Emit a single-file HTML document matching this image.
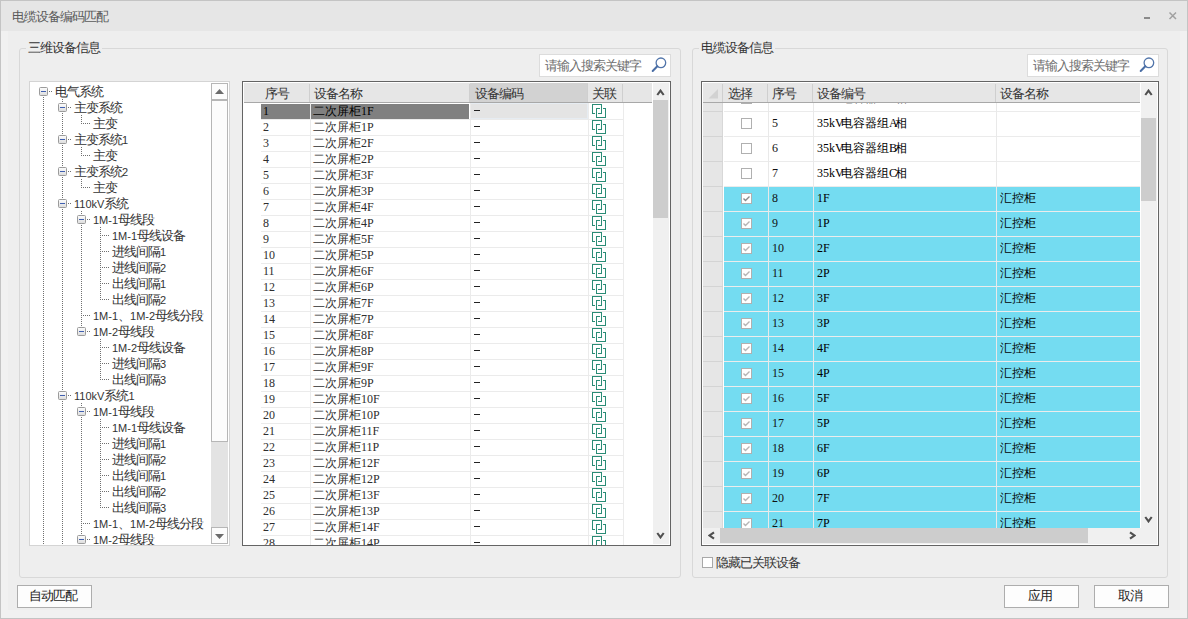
<!DOCTYPE html><html><head><meta charset="utf-8"><style>
*{margin:0;padding:0;box-sizing:border-box}
html,body{width:1188px;height:619px;overflow:hidden;background:#eeeeee;font-family:"Liberation Sans", sans-serif;font-size:12px;color:#111}
.abs{position:absolute}
.t{position:absolute;white-space:nowrap;line-height:16px;font-size:13px;letter-spacing:-1px}
.m{font-family:"Liberation Serif",serif;font-size:12px;letter-spacing:0}
.n{font-family:"Liberation Sans", sans-serif;font-size:11px;letter-spacing:0}
.s{font-size:12px;letter-spacing:0}
</style></head><body>
<div class="abs" style="left:0;top:0;width:1188px;height:619px;border:1px solid #c4c4c4;background:#f1f1f1"></div>
<div class="abs" style="left:1px;top:1px;width:1186px;height:30px;background:#e6e6e6"></div>
<div class="t" style="left:12px;top:9px;color:#5a5a5a">电缆设备编码匹配</div>
<div class="abs" style="left:1144px;top:17px;width:6px;height:2px;background:#8a8a8a"></div>
<svg class="abs" style="left:1168px;top:11px" width="10" height="10"><path d="M1.5 1.5L8 8M8 1.5L1.5 8" stroke="#a0a0a0" stroke-width="1.5"/></svg>
<div class="abs" style="left:8px;top:31px;width:1172px;height:579px;background:#eeeeee"></div>
<div class="abs" style="left:19px;top:48px;width:662px;height:530px;border:1px solid #d8d8d8;border-radius:3px"></div>
<div class="abs" style="left:26px;top:42px;width:76px;height:12px;background:#eeeeee"></div>
<div class="t" style="left:28px;top:40px;color:#333">三维设备信息</div>
<div class="abs" style="left:692px;top:48px;width:476px;height:530px;border:1px solid #d8d8d8;border-radius:3px"></div>
<div class="abs" style="left:699px;top:42px;width:76px;height:12px;background:#eeeeee"></div>
<div class="t" style="left:701px;top:40px;color:#333">电缆设备信息</div>
<div class="abs" style="left:539px;top:54px;width:132px;height:23px;border:1px solid #dcdcdc;background:#fff"></div>
<div class="t" style="left:545px;top:58px;color:#6d6d6d">请输入搜索关键字</div>
<svg class="abs" style="left:650px;top:56px" width="18" height="18"><circle cx="10.9" cy="6.8" r="4.8" fill="none" stroke="#5275aa" stroke-width="1.3"/><path d="M7.3 10.3L2.7 15" stroke="#4a6ea5" stroke-width="2" stroke-linecap="round"/></svg>
<div class="abs" style="left:1027px;top:54px;width:132px;height:23px;border:1px solid #dcdcdc;background:#fff"></div>
<div class="t" style="left:1033px;top:58px;color:#6d6d6d">请输入搜索关键字</div>
<svg class="abs" style="left:1138px;top:56px" width="18" height="18"><circle cx="10.9" cy="6.8" r="4.8" fill="none" stroke="#5275aa" stroke-width="1.3"/><path d="M7.3 10.3L2.7 15" stroke="#4a6ea5" stroke-width="2" stroke-linecap="round"/></svg>
<div class="abs" style="left:29px;top:81px;width:201px;height:465px;border:1px solid #d4d4d4;background:#fff;overflow:hidden">
<svg class="abs" style="left:0;top:0" width="201" height="465"><g fill="#707070"><rect x="32" y="17" width="1" height="1"/><rect x="32" y="19" width="1" height="1"/><rect x="51" y="33" width="1" height="1"/><rect x="51" y="35" width="1" height="1"/><rect x="51" y="37" width="1" height="1"/><rect x="51" y="39" width="1" height="1"/><rect x="51" y="41" width="1" height="1"/><rect x="32" y="31" width="1" height="1"/><rect x="32" y="33" width="1" height="1"/><rect x="32" y="35" width="1" height="1"/><rect x="32" y="37" width="1" height="1"/><rect x="32" y="39" width="1" height="1"/><rect x="32" y="41" width="1" height="1"/><rect x="32" y="43" width="1" height="1"/><rect x="32" y="45" width="1" height="1"/><rect x="32" y="47" width="1" height="1"/><rect x="32" y="49" width="1" height="1"/><rect x="32" y="51" width="1" height="1"/><rect x="51" y="65" width="1" height="1"/><rect x="51" y="67" width="1" height="1"/><rect x="51" y="69" width="1" height="1"/><rect x="51" y="71" width="1" height="1"/><rect x="51" y="73" width="1" height="1"/><rect x="32" y="63" width="1" height="1"/><rect x="32" y="65" width="1" height="1"/><rect x="32" y="67" width="1" height="1"/><rect x="32" y="69" width="1" height="1"/><rect x="32" y="71" width="1" height="1"/><rect x="32" y="73" width="1" height="1"/><rect x="32" y="75" width="1" height="1"/><rect x="32" y="77" width="1" height="1"/><rect x="32" y="79" width="1" height="1"/><rect x="32" y="81" width="1" height="1"/><rect x="32" y="83" width="1" height="1"/><rect x="51" y="97" width="1" height="1"/><rect x="51" y="99" width="1" height="1"/><rect x="51" y="101" width="1" height="1"/><rect x="51" y="103" width="1" height="1"/><rect x="51" y="105" width="1" height="1"/><rect x="32" y="95" width="1" height="1"/><rect x="32" y="97" width="1" height="1"/><rect x="32" y="99" width="1" height="1"/><rect x="32" y="101" width="1" height="1"/><rect x="32" y="103" width="1" height="1"/><rect x="32" y="105" width="1" height="1"/><rect x="32" y="107" width="1" height="1"/><rect x="32" y="109" width="1" height="1"/><rect x="32" y="111" width="1" height="1"/><rect x="32" y="113" width="1" height="1"/><rect x="32" y="115" width="1" height="1"/><rect x="51" y="129" width="1" height="1"/><rect x="51" y="131" width="1" height="1"/><rect x="70" y="145" width="1" height="1"/><rect x="70" y="147" width="1" height="1"/><rect x="70" y="149" width="1" height="1"/><rect x="70" y="151" width="1" height="1"/><rect x="70" y="153" width="1" height="1"/><rect x="70" y="155" width="1" height="1"/><rect x="70" y="157" width="1" height="1"/><rect x="70" y="159" width="1" height="1"/><rect x="70" y="161" width="1" height="1"/><rect x="70" y="163" width="1" height="1"/><rect x="70" y="165" width="1" height="1"/><rect x="70" y="167" width="1" height="1"/><rect x="70" y="169" width="1" height="1"/><rect x="70" y="171" width="1" height="1"/><rect x="70" y="173" width="1" height="1"/><rect x="70" y="175" width="1" height="1"/><rect x="70" y="177" width="1" height="1"/><rect x="70" y="179" width="1" height="1"/><rect x="70" y="181" width="1" height="1"/><rect x="70" y="183" width="1" height="1"/><rect x="70" y="185" width="1" height="1"/><rect x="70" y="187" width="1" height="1"/><rect x="70" y="189" width="1" height="1"/><rect x="70" y="191" width="1" height="1"/><rect x="70" y="193" width="1" height="1"/><rect x="70" y="195" width="1" height="1"/><rect x="70" y="197" width="1" height="1"/><rect x="70" y="199" width="1" height="1"/><rect x="70" y="201" width="1" height="1"/><rect x="70" y="203" width="1" height="1"/><rect x="70" y="205" width="1" height="1"/><rect x="70" y="207" width="1" height="1"/><rect x="70" y="209" width="1" height="1"/><rect x="70" y="211" width="1" height="1"/><rect x="70" y="213" width="1" height="1"/><rect x="70" y="215" width="1" height="1"/><rect x="70" y="217" width="1" height="1"/><rect x="51" y="143" width="1" height="1"/><rect x="51" y="145" width="1" height="1"/><rect x="51" y="147" width="1" height="1"/><rect x="51" y="149" width="1" height="1"/><rect x="51" y="151" width="1" height="1"/><rect x="51" y="153" width="1" height="1"/><rect x="51" y="155" width="1" height="1"/><rect x="51" y="157" width="1" height="1"/><rect x="51" y="159" width="1" height="1"/><rect x="51" y="161" width="1" height="1"/><rect x="51" y="163" width="1" height="1"/><rect x="51" y="165" width="1" height="1"/><rect x="51" y="167" width="1" height="1"/><rect x="51" y="169" width="1" height="1"/><rect x="51" y="171" width="1" height="1"/><rect x="51" y="173" width="1" height="1"/><rect x="51" y="175" width="1" height="1"/><rect x="51" y="177" width="1" height="1"/><rect x="51" y="179" width="1" height="1"/><rect x="51" y="181" width="1" height="1"/><rect x="51" y="183" width="1" height="1"/><rect x="51" y="185" width="1" height="1"/><rect x="51" y="187" width="1" height="1"/><rect x="51" y="189" width="1" height="1"/><rect x="51" y="191" width="1" height="1"/><rect x="51" y="193" width="1" height="1"/><rect x="51" y="195" width="1" height="1"/><rect x="51" y="197" width="1" height="1"/><rect x="51" y="199" width="1" height="1"/><rect x="51" y="201" width="1" height="1"/><rect x="51" y="203" width="1" height="1"/><rect x="51" y="205" width="1" height="1"/><rect x="51" y="207" width="1" height="1"/><rect x="51" y="209" width="1" height="1"/><rect x="51" y="211" width="1" height="1"/><rect x="51" y="213" width="1" height="1"/><rect x="51" y="215" width="1" height="1"/><rect x="51" y="217" width="1" height="1"/><rect x="51" y="219" width="1" height="1"/><rect x="51" y="221" width="1" height="1"/><rect x="51" y="223" width="1" height="1"/><rect x="51" y="225" width="1" height="1"/><rect x="51" y="227" width="1" height="1"/><rect x="51" y="229" width="1" height="1"/><rect x="51" y="231" width="1" height="1"/><rect x="51" y="233" width="1" height="1"/><rect x="51" y="235" width="1" height="1"/><rect x="51" y="237" width="1" height="1"/><rect x="51" y="239" width="1" height="1"/><rect x="51" y="241" width="1" height="1"/><rect x="51" y="243" width="1" height="1"/><rect x="70" y="257" width="1" height="1"/><rect x="70" y="259" width="1" height="1"/><rect x="70" y="261" width="1" height="1"/><rect x="70" y="263" width="1" height="1"/><rect x="70" y="265" width="1" height="1"/><rect x="70" y="267" width="1" height="1"/><rect x="70" y="269" width="1" height="1"/><rect x="70" y="271" width="1" height="1"/><rect x="70" y="273" width="1" height="1"/><rect x="70" y="275" width="1" height="1"/><rect x="70" y="277" width="1" height="1"/><rect x="70" y="279" width="1" height="1"/><rect x="70" y="281" width="1" height="1"/><rect x="70" y="283" width="1" height="1"/><rect x="70" y="285" width="1" height="1"/><rect x="70" y="287" width="1" height="1"/><rect x="70" y="289" width="1" height="1"/><rect x="70" y="291" width="1" height="1"/><rect x="70" y="293" width="1" height="1"/><rect x="70" y="295" width="1" height="1"/><rect x="70" y="297" width="1" height="1"/><rect x="32" y="127" width="1" height="1"/><rect x="32" y="129" width="1" height="1"/><rect x="32" y="131" width="1" height="1"/><rect x="32" y="133" width="1" height="1"/><rect x="32" y="135" width="1" height="1"/><rect x="32" y="137" width="1" height="1"/><rect x="32" y="139" width="1" height="1"/><rect x="32" y="141" width="1" height="1"/><rect x="32" y="143" width="1" height="1"/><rect x="32" y="145" width="1" height="1"/><rect x="32" y="147" width="1" height="1"/><rect x="32" y="149" width="1" height="1"/><rect x="32" y="151" width="1" height="1"/><rect x="32" y="153" width="1" height="1"/><rect x="32" y="155" width="1" height="1"/><rect x="32" y="157" width="1" height="1"/><rect x="32" y="159" width="1" height="1"/><rect x="32" y="161" width="1" height="1"/><rect x="32" y="163" width="1" height="1"/><rect x="32" y="165" width="1" height="1"/><rect x="32" y="167" width="1" height="1"/><rect x="32" y="169" width="1" height="1"/><rect x="32" y="171" width="1" height="1"/><rect x="32" y="173" width="1" height="1"/><rect x="32" y="175" width="1" height="1"/><rect x="32" y="177" width="1" height="1"/><rect x="32" y="179" width="1" height="1"/><rect x="32" y="181" width="1" height="1"/><rect x="32" y="183" width="1" height="1"/><rect x="32" y="185" width="1" height="1"/><rect x="32" y="187" width="1" height="1"/><rect x="32" y="189" width="1" height="1"/><rect x="32" y="191" width="1" height="1"/><rect x="32" y="193" width="1" height="1"/><rect x="32" y="195" width="1" height="1"/><rect x="32" y="197" width="1" height="1"/><rect x="32" y="199" width="1" height="1"/><rect x="32" y="201" width="1" height="1"/><rect x="32" y="203" width="1" height="1"/><rect x="32" y="205" width="1" height="1"/><rect x="32" y="207" width="1" height="1"/><rect x="32" y="209" width="1" height="1"/><rect x="32" y="211" width="1" height="1"/><rect x="32" y="213" width="1" height="1"/><rect x="32" y="215" width="1" height="1"/><rect x="32" y="217" width="1" height="1"/><rect x="32" y="219" width="1" height="1"/><rect x="32" y="221" width="1" height="1"/><rect x="32" y="223" width="1" height="1"/><rect x="32" y="225" width="1" height="1"/><rect x="32" y="227" width="1" height="1"/><rect x="32" y="229" width="1" height="1"/><rect x="32" y="231" width="1" height="1"/><rect x="32" y="233" width="1" height="1"/><rect x="32" y="235" width="1" height="1"/><rect x="32" y="237" width="1" height="1"/><rect x="32" y="239" width="1" height="1"/><rect x="32" y="241" width="1" height="1"/><rect x="32" y="243" width="1" height="1"/><rect x="32" y="245" width="1" height="1"/><rect x="32" y="247" width="1" height="1"/><rect x="32" y="249" width="1" height="1"/><rect x="32" y="251" width="1" height="1"/><rect x="32" y="253" width="1" height="1"/><rect x="32" y="255" width="1" height="1"/><rect x="32" y="257" width="1" height="1"/><rect x="32" y="259" width="1" height="1"/><rect x="32" y="261" width="1" height="1"/><rect x="32" y="263" width="1" height="1"/><rect x="32" y="265" width="1" height="1"/><rect x="32" y="267" width="1" height="1"/><rect x="32" y="269" width="1" height="1"/><rect x="32" y="271" width="1" height="1"/><rect x="32" y="273" width="1" height="1"/><rect x="32" y="275" width="1" height="1"/><rect x="32" y="277" width="1" height="1"/><rect x="32" y="279" width="1" height="1"/><rect x="32" y="281" width="1" height="1"/><rect x="32" y="283" width="1" height="1"/><rect x="32" y="285" width="1" height="1"/><rect x="32" y="287" width="1" height="1"/><rect x="32" y="289" width="1" height="1"/><rect x="32" y="291" width="1" height="1"/><rect x="32" y="293" width="1" height="1"/><rect x="32" y="295" width="1" height="1"/><rect x="32" y="297" width="1" height="1"/><rect x="32" y="299" width="1" height="1"/><rect x="32" y="301" width="1" height="1"/><rect x="32" y="303" width="1" height="1"/><rect x="32" y="305" width="1" height="1"/><rect x="32" y="307" width="1" height="1"/><rect x="51" y="321" width="1" height="1"/><rect x="51" y="323" width="1" height="1"/><rect x="70" y="337" width="1" height="1"/><rect x="70" y="339" width="1" height="1"/><rect x="70" y="341" width="1" height="1"/><rect x="70" y="343" width="1" height="1"/><rect x="70" y="345" width="1" height="1"/><rect x="70" y="347" width="1" height="1"/><rect x="70" y="349" width="1" height="1"/><rect x="70" y="351" width="1" height="1"/><rect x="70" y="353" width="1" height="1"/><rect x="70" y="355" width="1" height="1"/><rect x="70" y="357" width="1" height="1"/><rect x="70" y="359" width="1" height="1"/><rect x="70" y="361" width="1" height="1"/><rect x="70" y="363" width="1" height="1"/><rect x="70" y="365" width="1" height="1"/><rect x="70" y="367" width="1" height="1"/><rect x="70" y="369" width="1" height="1"/><rect x="70" y="371" width="1" height="1"/><rect x="70" y="373" width="1" height="1"/><rect x="70" y="375" width="1" height="1"/><rect x="70" y="377" width="1" height="1"/><rect x="70" y="379" width="1" height="1"/><rect x="70" y="381" width="1" height="1"/><rect x="70" y="383" width="1" height="1"/><rect x="70" y="385" width="1" height="1"/><rect x="70" y="387" width="1" height="1"/><rect x="70" y="389" width="1" height="1"/><rect x="70" y="391" width="1" height="1"/><rect x="70" y="393" width="1" height="1"/><rect x="70" y="395" width="1" height="1"/><rect x="70" y="397" width="1" height="1"/><rect x="70" y="399" width="1" height="1"/><rect x="70" y="401" width="1" height="1"/><rect x="70" y="403" width="1" height="1"/><rect x="70" y="405" width="1" height="1"/><rect x="70" y="407" width="1" height="1"/><rect x="70" y="409" width="1" height="1"/><rect x="70" y="411" width="1" height="1"/><rect x="70" y="413" width="1" height="1"/><rect x="70" y="415" width="1" height="1"/><rect x="70" y="417" width="1" height="1"/><rect x="70" y="419" width="1" height="1"/><rect x="70" y="421" width="1" height="1"/><rect x="70" y="423" width="1" height="1"/><rect x="70" y="425" width="1" height="1"/><rect x="51" y="335" width="1" height="1"/><rect x="51" y="337" width="1" height="1"/><rect x="51" y="339" width="1" height="1"/><rect x="51" y="341" width="1" height="1"/><rect x="51" y="343" width="1" height="1"/><rect x="51" y="345" width="1" height="1"/><rect x="51" y="347" width="1" height="1"/><rect x="51" y="349" width="1" height="1"/><rect x="51" y="351" width="1" height="1"/><rect x="51" y="353" width="1" height="1"/><rect x="51" y="355" width="1" height="1"/><rect x="51" y="357" width="1" height="1"/><rect x="51" y="359" width="1" height="1"/><rect x="51" y="361" width="1" height="1"/><rect x="51" y="363" width="1" height="1"/><rect x="51" y="365" width="1" height="1"/><rect x="51" y="367" width="1" height="1"/><rect x="51" y="369" width="1" height="1"/><rect x="51" y="371" width="1" height="1"/><rect x="51" y="373" width="1" height="1"/><rect x="51" y="375" width="1" height="1"/><rect x="51" y="377" width="1" height="1"/><rect x="51" y="379" width="1" height="1"/><rect x="51" y="381" width="1" height="1"/><rect x="51" y="383" width="1" height="1"/><rect x="51" y="385" width="1" height="1"/><rect x="51" y="387" width="1" height="1"/><rect x="51" y="389" width="1" height="1"/><rect x="51" y="391" width="1" height="1"/><rect x="51" y="393" width="1" height="1"/><rect x="51" y="395" width="1" height="1"/><rect x="51" y="397" width="1" height="1"/><rect x="51" y="399" width="1" height="1"/><rect x="51" y="401" width="1" height="1"/><rect x="51" y="403" width="1" height="1"/><rect x="51" y="405" width="1" height="1"/><rect x="51" y="407" width="1" height="1"/><rect x="51" y="409" width="1" height="1"/><rect x="51" y="411" width="1" height="1"/><rect x="51" y="413" width="1" height="1"/><rect x="51" y="415" width="1" height="1"/><rect x="51" y="417" width="1" height="1"/><rect x="51" y="419" width="1" height="1"/><rect x="51" y="421" width="1" height="1"/><rect x="51" y="423" width="1" height="1"/><rect x="51" y="425" width="1" height="1"/><rect x="51" y="427" width="1" height="1"/><rect x="51" y="429" width="1" height="1"/><rect x="51" y="431" width="1" height="1"/><rect x="51" y="433" width="1" height="1"/><rect x="51" y="435" width="1" height="1"/><rect x="51" y="437" width="1" height="1"/><rect x="51" y="439" width="1" height="1"/><rect x="51" y="441" width="1" height="1"/><rect x="51" y="443" width="1" height="1"/><rect x="51" y="445" width="1" height="1"/><rect x="51" y="447" width="1" height="1"/><rect x="51" y="449" width="1" height="1"/><rect x="51" y="451" width="1" height="1"/><rect x="13" y="15" width="1" height="1"/><rect x="13" y="17" width="1" height="1"/><rect x="13" y="19" width="1" height="1"/><rect x="13" y="21" width="1" height="1"/><rect x="13" y="23" width="1" height="1"/><rect x="13" y="25" width="1" height="1"/><rect x="13" y="27" width="1" height="1"/><rect x="13" y="29" width="1" height="1"/><rect x="13" y="31" width="1" height="1"/><rect x="13" y="33" width="1" height="1"/><rect x="13" y="35" width="1" height="1"/><rect x="13" y="37" width="1" height="1"/><rect x="13" y="39" width="1" height="1"/><rect x="13" y="41" width="1" height="1"/><rect x="13" y="43" width="1" height="1"/><rect x="13" y="45" width="1" height="1"/><rect x="13" y="47" width="1" height="1"/><rect x="13" y="49" width="1" height="1"/><rect x="13" y="51" width="1" height="1"/><rect x="13" y="53" width="1" height="1"/><rect x="13" y="55" width="1" height="1"/><rect x="13" y="57" width="1" height="1"/><rect x="13" y="59" width="1" height="1"/><rect x="13" y="61" width="1" height="1"/><rect x="13" y="63" width="1" height="1"/><rect x="13" y="65" width="1" height="1"/><rect x="13" y="67" width="1" height="1"/><rect x="13" y="69" width="1" height="1"/><rect x="13" y="71" width="1" height="1"/><rect x="13" y="73" width="1" height="1"/><rect x="13" y="75" width="1" height="1"/><rect x="13" y="77" width="1" height="1"/><rect x="13" y="79" width="1" height="1"/><rect x="13" y="81" width="1" height="1"/><rect x="13" y="83" width="1" height="1"/><rect x="13" y="85" width="1" height="1"/><rect x="13" y="87" width="1" height="1"/><rect x="13" y="89" width="1" height="1"/><rect x="13" y="91" width="1" height="1"/><rect x="13" y="93" width="1" height="1"/><rect x="13" y="95" width="1" height="1"/><rect x="13" y="97" width="1" height="1"/><rect x="13" y="99" width="1" height="1"/><rect x="13" y="101" width="1" height="1"/><rect x="13" y="103" width="1" height="1"/><rect x="13" y="105" width="1" height="1"/><rect x="13" y="107" width="1" height="1"/><rect x="13" y="109" width="1" height="1"/><rect x="13" y="111" width="1" height="1"/><rect x="13" y="113" width="1" height="1"/><rect x="13" y="115" width="1" height="1"/><rect x="13" y="117" width="1" height="1"/><rect x="13" y="119" width="1" height="1"/><rect x="13" y="121" width="1" height="1"/><rect x="13" y="123" width="1" height="1"/><rect x="13" y="125" width="1" height="1"/><rect x="13" y="127" width="1" height="1"/><rect x="13" y="129" width="1" height="1"/><rect x="13" y="131" width="1" height="1"/><rect x="13" y="133" width="1" height="1"/><rect x="13" y="135" width="1" height="1"/><rect x="13" y="137" width="1" height="1"/><rect x="13" y="139" width="1" height="1"/><rect x="13" y="141" width="1" height="1"/><rect x="13" y="143" width="1" height="1"/><rect x="13" y="145" width="1" height="1"/><rect x="13" y="147" width="1" height="1"/><rect x="13" y="149" width="1" height="1"/><rect x="13" y="151" width="1" height="1"/><rect x="13" y="153" width="1" height="1"/><rect x="13" y="155" width="1" height="1"/><rect x="13" y="157" width="1" height="1"/><rect x="13" y="159" width="1" height="1"/><rect x="13" y="161" width="1" height="1"/><rect x="13" y="163" width="1" height="1"/><rect x="13" y="165" width="1" height="1"/><rect x="13" y="167" width="1" height="1"/><rect x="13" y="169" width="1" height="1"/><rect x="13" y="171" width="1" height="1"/><rect x="13" y="173" width="1" height="1"/><rect x="13" y="175" width="1" height="1"/><rect x="13" y="177" width="1" height="1"/><rect x="13" y="179" width="1" height="1"/><rect x="13" y="181" width="1" height="1"/><rect x="13" y="183" width="1" height="1"/><rect x="13" y="185" width="1" height="1"/><rect x="13" y="187" width="1" height="1"/><rect x="13" y="189" width="1" height="1"/><rect x="13" y="191" width="1" height="1"/><rect x="13" y="193" width="1" height="1"/><rect x="13" y="195" width="1" height="1"/><rect x="13" y="197" width="1" height="1"/><rect x="13" y="199" width="1" height="1"/><rect x="13" y="201" width="1" height="1"/><rect x="13" y="203" width="1" height="1"/><rect x="13" y="205" width="1" height="1"/><rect x="13" y="207" width="1" height="1"/><rect x="13" y="209" width="1" height="1"/><rect x="13" y="211" width="1" height="1"/><rect x="13" y="213" width="1" height="1"/><rect x="13" y="215" width="1" height="1"/><rect x="13" y="217" width="1" height="1"/><rect x="13" y="219" width="1" height="1"/><rect x="13" y="221" width="1" height="1"/><rect x="13" y="223" width="1" height="1"/><rect x="13" y="225" width="1" height="1"/><rect x="13" y="227" width="1" height="1"/><rect x="13" y="229" width="1" height="1"/><rect x="13" y="231" width="1" height="1"/><rect x="13" y="233" width="1" height="1"/><rect x="13" y="235" width="1" height="1"/><rect x="13" y="237" width="1" height="1"/><rect x="13" y="239" width="1" height="1"/><rect x="13" y="241" width="1" height="1"/><rect x="13" y="243" width="1" height="1"/><rect x="13" y="245" width="1" height="1"/><rect x="13" y="247" width="1" height="1"/><rect x="13" y="249" width="1" height="1"/><rect x="13" y="251" width="1" height="1"/><rect x="13" y="253" width="1" height="1"/><rect x="13" y="255" width="1" height="1"/><rect x="13" y="257" width="1" height="1"/><rect x="13" y="259" width="1" height="1"/><rect x="13" y="261" width="1" height="1"/><rect x="13" y="263" width="1" height="1"/><rect x="13" y="265" width="1" height="1"/><rect x="13" y="267" width="1" height="1"/><rect x="13" y="269" width="1" height="1"/><rect x="13" y="271" width="1" height="1"/><rect x="13" y="273" width="1" height="1"/><rect x="13" y="275" width="1" height="1"/><rect x="13" y="277" width="1" height="1"/><rect x="13" y="279" width="1" height="1"/><rect x="13" y="281" width="1" height="1"/><rect x="13" y="283" width="1" height="1"/><rect x="13" y="285" width="1" height="1"/><rect x="13" y="287" width="1" height="1"/><rect x="13" y="289" width="1" height="1"/><rect x="13" y="291" width="1" height="1"/><rect x="13" y="293" width="1" height="1"/><rect x="13" y="295" width="1" height="1"/><rect x="13" y="297" width="1" height="1"/><rect x="13" y="299" width="1" height="1"/><rect x="13" y="301" width="1" height="1"/><rect x="13" y="303" width="1" height="1"/><rect x="13" y="305" width="1" height="1"/><rect x="13" y="307" width="1" height="1"/><rect x="13" y="309" width="1" height="1"/><rect x="13" y="311" width="1" height="1"/><rect x="13" y="313" width="1" height="1"/><rect x="13" y="315" width="1" height="1"/><rect x="13" y="317" width="1" height="1"/><rect x="13" y="319" width="1" height="1"/><rect x="13" y="321" width="1" height="1"/><rect x="13" y="323" width="1" height="1"/><rect x="13" y="325" width="1" height="1"/><rect x="13" y="327" width="1" height="1"/><rect x="13" y="329" width="1" height="1"/><rect x="13" y="331" width="1" height="1"/><rect x="13" y="333" width="1" height="1"/><rect x="13" y="335" width="1" height="1"/><rect x="13" y="337" width="1" height="1"/><rect x="13" y="339" width="1" height="1"/><rect x="13" y="341" width="1" height="1"/><rect x="13" y="343" width="1" height="1"/><rect x="13" y="345" width="1" height="1"/><rect x="13" y="347" width="1" height="1"/><rect x="13" y="349" width="1" height="1"/><rect x="13" y="351" width="1" height="1"/><rect x="13" y="353" width="1" height="1"/><rect x="13" y="355" width="1" height="1"/><rect x="13" y="357" width="1" height="1"/><rect x="13" y="359" width="1" height="1"/><rect x="13" y="361" width="1" height="1"/><rect x="13" y="363" width="1" height="1"/><rect x="13" y="365" width="1" height="1"/><rect x="13" y="367" width="1" height="1"/><rect x="13" y="369" width="1" height="1"/><rect x="13" y="371" width="1" height="1"/><rect x="13" y="373" width="1" height="1"/><rect x="13" y="375" width="1" height="1"/><rect x="13" y="377" width="1" height="1"/><rect x="13" y="379" width="1" height="1"/><rect x="13" y="381" width="1" height="1"/><rect x="13" y="383" width="1" height="1"/><rect x="13" y="385" width="1" height="1"/><rect x="13" y="387" width="1" height="1"/><rect x="13" y="389" width="1" height="1"/><rect x="13" y="391" width="1" height="1"/><rect x="13" y="393" width="1" height="1"/><rect x="13" y="395" width="1" height="1"/><rect x="13" y="397" width="1" height="1"/><rect x="13" y="399" width="1" height="1"/><rect x="13" y="401" width="1" height="1"/><rect x="13" y="403" width="1" height="1"/><rect x="13" y="405" width="1" height="1"/><rect x="13" y="407" width="1" height="1"/><rect x="13" y="409" width="1" height="1"/><rect x="13" y="411" width="1" height="1"/><rect x="13" y="413" width="1" height="1"/><rect x="13" y="415" width="1" height="1"/><rect x="13" y="417" width="1" height="1"/><rect x="13" y="419" width="1" height="1"/><rect x="13" y="421" width="1" height="1"/><rect x="13" y="423" width="1" height="1"/><rect x="13" y="425" width="1" height="1"/><rect x="13" y="427" width="1" height="1"/><rect x="13" y="429" width="1" height="1"/><rect x="13" y="431" width="1" height="1"/><rect x="13" y="433" width="1" height="1"/><rect x="13" y="435" width="1" height="1"/><rect x="13" y="437" width="1" height="1"/><rect x="13" y="439" width="1" height="1"/><rect x="13" y="441" width="1" height="1"/><rect x="13" y="443" width="1" height="1"/><rect x="13" y="445" width="1" height="1"/><rect x="13" y="447" width="1" height="1"/><rect x="13" y="449" width="1" height="1"/><rect x="13" y="451" width="1" height="1"/><rect x="13" y="453" width="1" height="1"/><rect x="13" y="455" width="1" height="1"/><rect x="13" y="457" width="1" height="1"/><rect x="13" y="459" width="1" height="1"/><rect x="13" y="461" width="1" height="1"/><rect x="13" y="463" width="1" height="1"/><rect x="32" y="319" width="1" height="1"/><rect x="32" y="321" width="1" height="1"/><rect x="32" y="323" width="1" height="1"/><rect x="32" y="325" width="1" height="1"/><rect x="32" y="327" width="1" height="1"/><rect x="32" y="329" width="1" height="1"/><rect x="32" y="331" width="1" height="1"/><rect x="32" y="333" width="1" height="1"/><rect x="32" y="335" width="1" height="1"/><rect x="32" y="337" width="1" height="1"/><rect x="32" y="339" width="1" height="1"/><rect x="32" y="341" width="1" height="1"/><rect x="32" y="343" width="1" height="1"/><rect x="32" y="345" width="1" height="1"/><rect x="32" y="347" width="1" height="1"/><rect x="32" y="349" width="1" height="1"/><rect x="32" y="351" width="1" height="1"/><rect x="32" y="353" width="1" height="1"/><rect x="32" y="355" width="1" height="1"/><rect x="32" y="357" width="1" height="1"/><rect x="32" y="359" width="1" height="1"/><rect x="32" y="361" width="1" height="1"/><rect x="32" y="363" width="1" height="1"/><rect x="32" y="365" width="1" height="1"/><rect x="32" y="367" width="1" height="1"/><rect x="32" y="369" width="1" height="1"/><rect x="32" y="371" width="1" height="1"/><rect x="32" y="373" width="1" height="1"/><rect x="32" y="375" width="1" height="1"/><rect x="32" y="377" width="1" height="1"/><rect x="32" y="379" width="1" height="1"/><rect x="32" y="381" width="1" height="1"/><rect x="32" y="383" width="1" height="1"/><rect x="32" y="385" width="1" height="1"/><rect x="32" y="387" width="1" height="1"/><rect x="32" y="389" width="1" height="1"/><rect x="32" y="391" width="1" height="1"/><rect x="32" y="393" width="1" height="1"/><rect x="32" y="395" width="1" height="1"/><rect x="32" y="397" width="1" height="1"/><rect x="32" y="399" width="1" height="1"/><rect x="32" y="401" width="1" height="1"/><rect x="32" y="403" width="1" height="1"/><rect x="32" y="405" width="1" height="1"/><rect x="32" y="407" width="1" height="1"/><rect x="32" y="409" width="1" height="1"/><rect x="32" y="411" width="1" height="1"/><rect x="32" y="413" width="1" height="1"/><rect x="32" y="415" width="1" height="1"/><rect x="32" y="417" width="1" height="1"/><rect x="32" y="419" width="1" height="1"/><rect x="32" y="421" width="1" height="1"/><rect x="32" y="423" width="1" height="1"/><rect x="32" y="425" width="1" height="1"/><rect x="32" y="427" width="1" height="1"/><rect x="32" y="429" width="1" height="1"/><rect x="32" y="431" width="1" height="1"/><rect x="32" y="433" width="1" height="1"/><rect x="32" y="435" width="1" height="1"/><rect x="32" y="437" width="1" height="1"/><rect x="32" y="439" width="1" height="1"/><rect x="32" y="441" width="1" height="1"/><rect x="32" y="443" width="1" height="1"/><rect x="32" y="445" width="1" height="1"/><rect x="32" y="447" width="1" height="1"/><rect x="32" y="449" width="1" height="1"/><rect x="32" y="451" width="1" height="1"/><rect x="32" y="453" width="1" height="1"/><rect x="32" y="455" width="1" height="1"/><rect x="32" y="457" width="1" height="1"/><rect x="32" y="459" width="1" height="1"/><rect x="32" y="461" width="1" height="1"/><rect x="32" y="463" width="1" height="1"/><rect x="51" y="463" width="1" height="1"/><rect x="19" y="9" width="1" height="1"/><rect x="21" y="9" width="1" height="1"/><rect x="38" y="25" width="1" height="1"/><rect x="40" y="25" width="1" height="1"/><rect x="53" y="41" width="1" height="1"/><rect x="55" y="41" width="1" height="1"/><rect x="57" y="41" width="1" height="1"/><rect x="59" y="41" width="1" height="1"/><rect x="38" y="57" width="1" height="1"/><rect x="40" y="57" width="1" height="1"/><rect x="53" y="73" width="1" height="1"/><rect x="55" y="73" width="1" height="1"/><rect x="57" y="73" width="1" height="1"/><rect x="59" y="73" width="1" height="1"/><rect x="38" y="89" width="1" height="1"/><rect x="40" y="89" width="1" height="1"/><rect x="53" y="105" width="1" height="1"/><rect x="55" y="105" width="1" height="1"/><rect x="57" y="105" width="1" height="1"/><rect x="59" y="105" width="1" height="1"/><rect x="38" y="121" width="1" height="1"/><rect x="40" y="121" width="1" height="1"/><rect x="57" y="137" width="1" height="1"/><rect x="59" y="137" width="1" height="1"/><rect x="72" y="153" width="1" height="1"/><rect x="74" y="153" width="1" height="1"/><rect x="76" y="153" width="1" height="1"/><rect x="78" y="153" width="1" height="1"/><rect x="72" y="169" width="1" height="1"/><rect x="74" y="169" width="1" height="1"/><rect x="76" y="169" width="1" height="1"/><rect x="78" y="169" width="1" height="1"/><rect x="72" y="185" width="1" height="1"/><rect x="74" y="185" width="1" height="1"/><rect x="76" y="185" width="1" height="1"/><rect x="78" y="185" width="1" height="1"/><rect x="72" y="201" width="1" height="1"/><rect x="74" y="201" width="1" height="1"/><rect x="76" y="201" width="1" height="1"/><rect x="78" y="201" width="1" height="1"/><rect x="72" y="217" width="1" height="1"/><rect x="74" y="217" width="1" height="1"/><rect x="76" y="217" width="1" height="1"/><rect x="78" y="217" width="1" height="1"/><rect x="53" y="233" width="1" height="1"/><rect x="55" y="233" width="1" height="1"/><rect x="57" y="233" width="1" height="1"/><rect x="59" y="233" width="1" height="1"/><rect x="57" y="249" width="1" height="1"/><rect x="59" y="249" width="1" height="1"/><rect x="72" y="265" width="1" height="1"/><rect x="74" y="265" width="1" height="1"/><rect x="76" y="265" width="1" height="1"/><rect x="78" y="265" width="1" height="1"/><rect x="72" y="281" width="1" height="1"/><rect x="74" y="281" width="1" height="1"/><rect x="76" y="281" width="1" height="1"/><rect x="78" y="281" width="1" height="1"/><rect x="72" y="297" width="1" height="1"/><rect x="74" y="297" width="1" height="1"/><rect x="76" y="297" width="1" height="1"/><rect x="78" y="297" width="1" height="1"/><rect x="38" y="313" width="1" height="1"/><rect x="40" y="313" width="1" height="1"/><rect x="57" y="329" width="1" height="1"/><rect x="59" y="329" width="1" height="1"/><rect x="72" y="345" width="1" height="1"/><rect x="74" y="345" width="1" height="1"/><rect x="76" y="345" width="1" height="1"/><rect x="78" y="345" width="1" height="1"/><rect x="72" y="361" width="1" height="1"/><rect x="74" y="361" width="1" height="1"/><rect x="76" y="361" width="1" height="1"/><rect x="78" y="361" width="1" height="1"/><rect x="72" y="377" width="1" height="1"/><rect x="74" y="377" width="1" height="1"/><rect x="76" y="377" width="1" height="1"/><rect x="78" y="377" width="1" height="1"/><rect x="72" y="393" width="1" height="1"/><rect x="74" y="393" width="1" height="1"/><rect x="76" y="393" width="1" height="1"/><rect x="78" y="393" width="1" height="1"/><rect x="72" y="409" width="1" height="1"/><rect x="74" y="409" width="1" height="1"/><rect x="76" y="409" width="1" height="1"/><rect x="78" y="409" width="1" height="1"/><rect x="72" y="425" width="1" height="1"/><rect x="74" y="425" width="1" height="1"/><rect x="76" y="425" width="1" height="1"/><rect x="78" y="425" width="1" height="1"/><rect x="53" y="441" width="1" height="1"/><rect x="55" y="441" width="1" height="1"/><rect x="57" y="441" width="1" height="1"/><rect x="59" y="441" width="1" height="1"/><rect x="57" y="457" width="1" height="1"/><rect x="59" y="457" width="1" height="1"/></g>
<rect x="9.5" y="5.5" width="8" height="8" rx="1" fill="url(#eg)" stroke="#9b9b9b"/>
<rect x="11" y="9" width="5" height="1" fill="#3f5fb0"/>
<rect x="28.5" y="21.5" width="8" height="8" rx="1" fill="url(#eg)" stroke="#9b9b9b"/>
<rect x="30" y="25" width="5" height="1" fill="#3f5fb0"/>
<rect x="28.5" y="53.5" width="8" height="8" rx="1" fill="url(#eg)" stroke="#9b9b9b"/>
<rect x="30" y="57" width="5" height="1" fill="#3f5fb0"/>
<rect x="28.5" y="85.5" width="8" height="8" rx="1" fill="url(#eg)" stroke="#9b9b9b"/>
<rect x="30" y="89" width="5" height="1" fill="#3f5fb0"/>
<rect x="28.5" y="117.5" width="8" height="8" rx="1" fill="url(#eg)" stroke="#9b9b9b"/>
<rect x="30" y="121" width="5" height="1" fill="#3f5fb0"/>
<rect x="47.5" y="133.5" width="8" height="8" rx="1" fill="url(#eg)" stroke="#9b9b9b"/>
<rect x="49" y="137" width="5" height="1" fill="#3f5fb0"/>
<rect x="47.5" y="245.5" width="8" height="8" rx="1" fill="url(#eg)" stroke="#9b9b9b"/>
<rect x="49" y="249" width="5" height="1" fill="#3f5fb0"/>
<rect x="28.5" y="309.5" width="8" height="8" rx="1" fill="url(#eg)" stroke="#9b9b9b"/>
<rect x="30" y="313" width="5" height="1" fill="#3f5fb0"/>
<rect x="47.5" y="325.5" width="8" height="8" rx="1" fill="url(#eg)" stroke="#9b9b9b"/>
<rect x="49" y="329" width="5" height="1" fill="#3f5fb0"/>
<rect x="47.5" y="453.5" width="8" height="8" rx="1" fill="url(#eg)" stroke="#9b9b9b"/>
<rect x="49" y="457" width="5" height="1" fill="#3f5fb0"/>
<defs><linearGradient id="eg" x1="0" y1="0" x2="0" y2="1"><stop offset="0" stop-color="#fdfdfd"/><stop offset="1" stop-color="#dcdcdc"/></linearGradient></defs></svg>
<div class="t" style="left:25px;top:2px;color:#333">电气系统</div>
<div class="t" style="left:44px;top:18px;color:#333">主变系统</div>
<div class="t" style="left:63px;top:34px;color:#333">主变</div>
<div class="t" style="left:44px;top:50px;color:#333">主变系统<span style="font-size:11px;letter-spacing:0">1</span></div>
<div class="t" style="left:63px;top:66px;color:#333">主变</div>
<div class="t" style="left:44px;top:82px;color:#333">主变系统<span style="font-size:11px;letter-spacing:0">2</span></div>
<div class="t" style="left:63px;top:98px;color:#333">主变</div>
<div class="t" style="left:44px;top:114px;color:#333"><span style="font-size:11px;letter-spacing:0">110kV</span>系统</div>
<div class="t" style="left:63px;top:130px;color:#333"><span style="font-size:11px;letter-spacing:0">1M-1</span>母线段</div>
<div class="t" style="left:82px;top:146px;color:#333"><span style="font-size:11px;letter-spacing:0">1M-1</span>母线设备</div>
<div class="t" style="left:82px;top:162px;color:#333">进线间隔<span style="font-size:11px;letter-spacing:0">1</span></div>
<div class="t" style="left:82px;top:178px;color:#333">进线间隔<span style="font-size:11px;letter-spacing:0">2</span></div>
<div class="t" style="left:82px;top:194px;color:#333">出线间隔<span style="font-size:11px;letter-spacing:0">1</span></div>
<div class="t" style="left:82px;top:210px;color:#333">出线间隔<span style="font-size:11px;letter-spacing:0">2</span></div>
<div class="t" style="left:63px;top:226px;color:#333"><span style="font-size:11px;letter-spacing:0">1M-1</span>、<span style="font-size:11px;letter-spacing:0">1M-2</span>母线分段</div>
<div class="t" style="left:63px;top:242px;color:#333"><span style="font-size:11px;letter-spacing:0">1M-2</span>母线段</div>
<div class="t" style="left:82px;top:258px;color:#333"><span style="font-size:11px;letter-spacing:0">1M-2</span>母线设备</div>
<div class="t" style="left:82px;top:274px;color:#333">进线间隔<span style="font-size:11px;letter-spacing:0">3</span></div>
<div class="t" style="left:82px;top:290px;color:#333">出线间隔<span style="font-size:11px;letter-spacing:0">3</span></div>
<div class="t" style="left:44px;top:306px;color:#333"><span style="font-size:11px;letter-spacing:0">110kV</span>系统<span style="font-size:11px;letter-spacing:0">1</span></div>
<div class="t" style="left:63px;top:322px;color:#333"><span style="font-size:11px;letter-spacing:0">1M-1</span>母线段</div>
<div class="t" style="left:82px;top:338px;color:#333"><span style="font-size:11px;letter-spacing:0">1M-1</span>母线设备</div>
<div class="t" style="left:82px;top:354px;color:#333">进线间隔<span style="font-size:11px;letter-spacing:0">1</span></div>
<div class="t" style="left:82px;top:370px;color:#333">进线间隔<span style="font-size:11px;letter-spacing:0">2</span></div>
<div class="t" style="left:82px;top:386px;color:#333">出线间隔<span style="font-size:11px;letter-spacing:0">1</span></div>
<div class="t" style="left:82px;top:402px;color:#333">出线间隔<span style="font-size:11px;letter-spacing:0">2</span></div>
<div class="t" style="left:82px;top:418px;color:#333">出线间隔<span style="font-size:11px;letter-spacing:0">3</span></div>
<div class="t" style="left:63px;top:434px;color:#333"><span style="font-size:11px;letter-spacing:0">1M-1</span>、<span style="font-size:11px;letter-spacing:0">1M-2</span>母线分段</div>
<div class="t" style="left:63px;top:450px;color:#333"><span style="font-size:11px;letter-spacing:0">1M-2</span>母线段</div>
<div class="abs" style="left:181px;top:1px;width:17px;height:461px;background:#e3e3e3"></div>
<div class="abs" style="left:181px;top:1px;width:17px;height:17px;border:1px solid #b6b6b6;background:#fcfcfc"></div>
<svg class="abs" style="left:185px;top:7px" width="9" height="5"><path d="M0 5L4.5 0L9 5Z" fill="#6b6b6b"/></svg>
<div class="abs" style="left:181px;top:18px;width:17px;height:342px;border:1px solid #b6b6b6;background:#fcfcfc"></div>
<div class="abs" style="left:181px;top:445px;width:17px;height:17px;border:1px solid #b6b6b6;background:#fcfcfc"></div>
<svg class="abs" style="left:185px;top:452px" width="9" height="5"><path d="M0 0L4.5 5L9 0Z" fill="#6b6b6b"/></svg>
</div>
<div class="abs" style="left:242px;top:81px;width:429px;height:465px;border:1px solid #646464;background:#fff;overflow:hidden">
<div class="abs" style="left:1px;top:1px;width:408px;height:20px;background:#e6e6e6;border-bottom:1px solid #a8a8a8"></div>
<div class="abs" style="left:227px;top:1px;width:118px;height:19px;background:#d2d2d2"></div>
<div class="abs" style="left:66px;top:2px;width:1px;height:18px;background:#cfcfcf"></div>
<div class="abs" style="left:226px;top:2px;width:1px;height:18px;background:#cfcfcf"></div>
<div class="abs" style="left:344px;top:2px;width:1px;height:18px;background:#cfcfcf"></div>
<div class="abs" style="left:379px;top:2px;width:1px;height:18px;background:#cfcfcf"></div>
<div class="t" style="left:22px;top:4px;color:#333">序号</div>
<div class="t" style="left:71px;top:4px;color:#333">设备名称</div>
<div class="t" style="left:232px;top:4px;color:#333">设备编码</div>
<div class="t" style="left:349px;top:4px;color:#333">关联</div>
<div class="abs" style="left:18px;top:37px;width:363px;height:1px;background:#ebebeb"></div>
<div class="abs" style="left:18px;top:22px;width:49px;height:15px;background:#808080"></div>
<div class="abs" style="left:68px;top:22px;width:158px;height:15px;background:#808080"></div>
<div class="abs" style="left:227px;top:21px;width:118px;height:16px;background:#e4e4e4;border:1px solid #e6ecf2"></div>
<div class="t s" style="left:20px;top:21px;line-height:16px;color:#000"><span class="m">1</span></div>
<div class="t s" style="left:70px;top:21px;color:#000">二次屏柜<span class="m">1<span style="letter-spacing:-0.67px">F</span></span></div>
<div class="abs" style="left:231px;top:28px;width:6px;height:1px;background:#222"></div>
<div class="abs" style="left:349px;top:22px;width:14px;height:14px"><svg width="14" height="14" fill="#2a8c76"><rect x="0" y="0" width="10" height="1"/><rect x="0" y="0" width="1" height="10"/><rect x="9" y="0" width="1" height="10"/><rect x="0" y="9" width="3" height="1"/><rect x="6" y="9" width="4" height="1"/><rect x="4" y="4" width="1" height="10"/><rect x="4" y="13" width="10" height="1"/><rect x="13" y="4" width="1" height="10"/><rect x="4" y="4" width="4" height="1"/><rect x="11" y="4" width="3" height="1"/></svg></div>
<div class="abs" style="left:18px;top:53px;width:363px;height:1px;background:#ebebeb"></div>
<div class="t s" style="left:20px;top:37px;line-height:16px;color:#2e2e2e"><span class="m">2</span></div>
<div class="t s" style="left:70px;top:37px;color:#2e2e2e">二次屏柜<span class="m">1<span style="letter-spacing:-0.67px">P</span></span></div>
<div class="abs" style="left:231px;top:44px;width:6px;height:1px;background:#222"></div>
<div class="abs" style="left:349px;top:38px;width:14px;height:14px"><svg width="14" height="14" fill="#2a8c76"><rect x="0" y="0" width="10" height="1"/><rect x="0" y="0" width="1" height="10"/><rect x="9" y="0" width="1" height="10"/><rect x="0" y="9" width="3" height="1"/><rect x="6" y="9" width="4" height="1"/><rect x="4" y="4" width="1" height="10"/><rect x="4" y="13" width="10" height="1"/><rect x="13" y="4" width="1" height="10"/><rect x="4" y="4" width="4" height="1"/><rect x="11" y="4" width="3" height="1"/></svg></div>
<div class="abs" style="left:18px;top:69px;width:363px;height:1px;background:#ebebeb"></div>
<div class="t s" style="left:20px;top:53px;line-height:16px;color:#2e2e2e"><span class="m">3</span></div>
<div class="t s" style="left:70px;top:53px;color:#2e2e2e">二次屏柜<span class="m">2<span style="letter-spacing:-0.67px">F</span></span></div>
<div class="abs" style="left:231px;top:60px;width:6px;height:1px;background:#222"></div>
<div class="abs" style="left:349px;top:54px;width:14px;height:14px"><svg width="14" height="14" fill="#2a8c76"><rect x="0" y="0" width="10" height="1"/><rect x="0" y="0" width="1" height="10"/><rect x="9" y="0" width="1" height="10"/><rect x="0" y="9" width="3" height="1"/><rect x="6" y="9" width="4" height="1"/><rect x="4" y="4" width="1" height="10"/><rect x="4" y="13" width="10" height="1"/><rect x="13" y="4" width="1" height="10"/><rect x="4" y="4" width="4" height="1"/><rect x="11" y="4" width="3" height="1"/></svg></div>
<div class="abs" style="left:18px;top:85px;width:363px;height:1px;background:#ebebeb"></div>
<div class="t s" style="left:20px;top:69px;line-height:16px;color:#2e2e2e"><span class="m">4</span></div>
<div class="t s" style="left:70px;top:69px;color:#2e2e2e">二次屏柜<span class="m">2<span style="letter-spacing:-0.67px">P</span></span></div>
<div class="abs" style="left:231px;top:76px;width:6px;height:1px;background:#222"></div>
<div class="abs" style="left:349px;top:70px;width:14px;height:14px"><svg width="14" height="14" fill="#2a8c76"><rect x="0" y="0" width="10" height="1"/><rect x="0" y="0" width="1" height="10"/><rect x="9" y="0" width="1" height="10"/><rect x="0" y="9" width="3" height="1"/><rect x="6" y="9" width="4" height="1"/><rect x="4" y="4" width="1" height="10"/><rect x="4" y="13" width="10" height="1"/><rect x="13" y="4" width="1" height="10"/><rect x="4" y="4" width="4" height="1"/><rect x="11" y="4" width="3" height="1"/></svg></div>
<div class="abs" style="left:18px;top:101px;width:363px;height:1px;background:#ebebeb"></div>
<div class="t s" style="left:20px;top:85px;line-height:16px;color:#2e2e2e"><span class="m">5</span></div>
<div class="t s" style="left:70px;top:85px;color:#2e2e2e">二次屏柜<span class="m">3<span style="letter-spacing:-0.67px">F</span></span></div>
<div class="abs" style="left:231px;top:92px;width:6px;height:1px;background:#222"></div>
<div class="abs" style="left:349px;top:86px;width:14px;height:14px"><svg width="14" height="14" fill="#2a8c76"><rect x="0" y="0" width="10" height="1"/><rect x="0" y="0" width="1" height="10"/><rect x="9" y="0" width="1" height="10"/><rect x="0" y="9" width="3" height="1"/><rect x="6" y="9" width="4" height="1"/><rect x="4" y="4" width="1" height="10"/><rect x="4" y="13" width="10" height="1"/><rect x="13" y="4" width="1" height="10"/><rect x="4" y="4" width="4" height="1"/><rect x="11" y="4" width="3" height="1"/></svg></div>
<div class="abs" style="left:18px;top:117px;width:363px;height:1px;background:#ebebeb"></div>
<div class="t s" style="left:20px;top:101px;line-height:16px;color:#2e2e2e"><span class="m">6</span></div>
<div class="t s" style="left:70px;top:101px;color:#2e2e2e">二次屏柜<span class="m">3<span style="letter-spacing:-0.67px">P</span></span></div>
<div class="abs" style="left:231px;top:108px;width:6px;height:1px;background:#222"></div>
<div class="abs" style="left:349px;top:102px;width:14px;height:14px"><svg width="14" height="14" fill="#2a8c76"><rect x="0" y="0" width="10" height="1"/><rect x="0" y="0" width="1" height="10"/><rect x="9" y="0" width="1" height="10"/><rect x="0" y="9" width="3" height="1"/><rect x="6" y="9" width="4" height="1"/><rect x="4" y="4" width="1" height="10"/><rect x="4" y="13" width="10" height="1"/><rect x="13" y="4" width="1" height="10"/><rect x="4" y="4" width="4" height="1"/><rect x="11" y="4" width="3" height="1"/></svg></div>
<div class="abs" style="left:18px;top:133px;width:363px;height:1px;background:#ebebeb"></div>
<div class="t s" style="left:20px;top:117px;line-height:16px;color:#2e2e2e"><span class="m">7</span></div>
<div class="t s" style="left:70px;top:117px;color:#2e2e2e">二次屏柜<span class="m">4<span style="letter-spacing:-0.67px">F</span></span></div>
<div class="abs" style="left:231px;top:124px;width:6px;height:1px;background:#222"></div>
<div class="abs" style="left:349px;top:118px;width:14px;height:14px"><svg width="14" height="14" fill="#2a8c76"><rect x="0" y="0" width="10" height="1"/><rect x="0" y="0" width="1" height="10"/><rect x="9" y="0" width="1" height="10"/><rect x="0" y="9" width="3" height="1"/><rect x="6" y="9" width="4" height="1"/><rect x="4" y="4" width="1" height="10"/><rect x="4" y="13" width="10" height="1"/><rect x="13" y="4" width="1" height="10"/><rect x="4" y="4" width="4" height="1"/><rect x="11" y="4" width="3" height="1"/></svg></div>
<div class="abs" style="left:18px;top:149px;width:363px;height:1px;background:#ebebeb"></div>
<div class="t s" style="left:20px;top:133px;line-height:16px;color:#2e2e2e"><span class="m">8</span></div>
<div class="t s" style="left:70px;top:133px;color:#2e2e2e">二次屏柜<span class="m">4<span style="letter-spacing:-0.67px">P</span></span></div>
<div class="abs" style="left:231px;top:140px;width:6px;height:1px;background:#222"></div>
<div class="abs" style="left:349px;top:134px;width:14px;height:14px"><svg width="14" height="14" fill="#2a8c76"><rect x="0" y="0" width="10" height="1"/><rect x="0" y="0" width="1" height="10"/><rect x="9" y="0" width="1" height="10"/><rect x="0" y="9" width="3" height="1"/><rect x="6" y="9" width="4" height="1"/><rect x="4" y="4" width="1" height="10"/><rect x="4" y="13" width="10" height="1"/><rect x="13" y="4" width="1" height="10"/><rect x="4" y="4" width="4" height="1"/><rect x="11" y="4" width="3" height="1"/></svg></div>
<div class="abs" style="left:18px;top:165px;width:363px;height:1px;background:#ebebeb"></div>
<div class="t s" style="left:20px;top:149px;line-height:16px;color:#2e2e2e"><span class="m">9</span></div>
<div class="t s" style="left:70px;top:149px;color:#2e2e2e">二次屏柜<span class="m">5<span style="letter-spacing:-0.67px">F</span></span></div>
<div class="abs" style="left:231px;top:156px;width:6px;height:1px;background:#222"></div>
<div class="abs" style="left:349px;top:150px;width:14px;height:14px"><svg width="14" height="14" fill="#2a8c76"><rect x="0" y="0" width="10" height="1"/><rect x="0" y="0" width="1" height="10"/><rect x="9" y="0" width="1" height="10"/><rect x="0" y="9" width="3" height="1"/><rect x="6" y="9" width="4" height="1"/><rect x="4" y="4" width="1" height="10"/><rect x="4" y="13" width="10" height="1"/><rect x="13" y="4" width="1" height="10"/><rect x="4" y="4" width="4" height="1"/><rect x="11" y="4" width="3" height="1"/></svg></div>
<div class="abs" style="left:18px;top:181px;width:363px;height:1px;background:#ebebeb"></div>
<div class="t s" style="left:20px;top:165px;line-height:16px;color:#2e2e2e"><span class="m">10</span></div>
<div class="t s" style="left:70px;top:165px;color:#2e2e2e">二次屏柜<span class="m">5<span style="letter-spacing:-0.67px">P</span></span></div>
<div class="abs" style="left:231px;top:172px;width:6px;height:1px;background:#222"></div>
<div class="abs" style="left:349px;top:166px;width:14px;height:14px"><svg width="14" height="14" fill="#2a8c76"><rect x="0" y="0" width="10" height="1"/><rect x="0" y="0" width="1" height="10"/><rect x="9" y="0" width="1" height="10"/><rect x="0" y="9" width="3" height="1"/><rect x="6" y="9" width="4" height="1"/><rect x="4" y="4" width="1" height="10"/><rect x="4" y="13" width="10" height="1"/><rect x="13" y="4" width="1" height="10"/><rect x="4" y="4" width="4" height="1"/><rect x="11" y="4" width="3" height="1"/></svg></div>
<div class="abs" style="left:18px;top:197px;width:363px;height:1px;background:#ebebeb"></div>
<div class="t s" style="left:20px;top:181px;line-height:16px;color:#2e2e2e"><span class="m">11</span></div>
<div class="t s" style="left:70px;top:181px;color:#2e2e2e">二次屏柜<span class="m">6<span style="letter-spacing:-0.67px">F</span></span></div>
<div class="abs" style="left:231px;top:188px;width:6px;height:1px;background:#222"></div>
<div class="abs" style="left:349px;top:182px;width:14px;height:14px"><svg width="14" height="14" fill="#2a8c76"><rect x="0" y="0" width="10" height="1"/><rect x="0" y="0" width="1" height="10"/><rect x="9" y="0" width="1" height="10"/><rect x="0" y="9" width="3" height="1"/><rect x="6" y="9" width="4" height="1"/><rect x="4" y="4" width="1" height="10"/><rect x="4" y="13" width="10" height="1"/><rect x="13" y="4" width="1" height="10"/><rect x="4" y="4" width="4" height="1"/><rect x="11" y="4" width="3" height="1"/></svg></div>
<div class="abs" style="left:18px;top:213px;width:363px;height:1px;background:#ebebeb"></div>
<div class="t s" style="left:20px;top:197px;line-height:16px;color:#2e2e2e"><span class="m">12</span></div>
<div class="t s" style="left:70px;top:197px;color:#2e2e2e">二次屏柜<span class="m">6<span style="letter-spacing:-0.67px">P</span></span></div>
<div class="abs" style="left:231px;top:204px;width:6px;height:1px;background:#222"></div>
<div class="abs" style="left:349px;top:198px;width:14px;height:14px"><svg width="14" height="14" fill="#2a8c76"><rect x="0" y="0" width="10" height="1"/><rect x="0" y="0" width="1" height="10"/><rect x="9" y="0" width="1" height="10"/><rect x="0" y="9" width="3" height="1"/><rect x="6" y="9" width="4" height="1"/><rect x="4" y="4" width="1" height="10"/><rect x="4" y="13" width="10" height="1"/><rect x="13" y="4" width="1" height="10"/><rect x="4" y="4" width="4" height="1"/><rect x="11" y="4" width="3" height="1"/></svg></div>
<div class="abs" style="left:18px;top:229px;width:363px;height:1px;background:#ebebeb"></div>
<div class="t s" style="left:20px;top:213px;line-height:16px;color:#2e2e2e"><span class="m">13</span></div>
<div class="t s" style="left:70px;top:213px;color:#2e2e2e">二次屏柜<span class="m">7<span style="letter-spacing:-0.67px">F</span></span></div>
<div class="abs" style="left:231px;top:220px;width:6px;height:1px;background:#222"></div>
<div class="abs" style="left:349px;top:214px;width:14px;height:14px"><svg width="14" height="14" fill="#2a8c76"><rect x="0" y="0" width="10" height="1"/><rect x="0" y="0" width="1" height="10"/><rect x="9" y="0" width="1" height="10"/><rect x="0" y="9" width="3" height="1"/><rect x="6" y="9" width="4" height="1"/><rect x="4" y="4" width="1" height="10"/><rect x="4" y="13" width="10" height="1"/><rect x="13" y="4" width="1" height="10"/><rect x="4" y="4" width="4" height="1"/><rect x="11" y="4" width="3" height="1"/></svg></div>
<div class="abs" style="left:18px;top:245px;width:363px;height:1px;background:#ebebeb"></div>
<div class="t s" style="left:20px;top:229px;line-height:16px;color:#2e2e2e"><span class="m">14</span></div>
<div class="t s" style="left:70px;top:229px;color:#2e2e2e">二次屏柜<span class="m">7<span style="letter-spacing:-0.67px">P</span></span></div>
<div class="abs" style="left:231px;top:236px;width:6px;height:1px;background:#222"></div>
<div class="abs" style="left:349px;top:230px;width:14px;height:14px"><svg width="14" height="14" fill="#2a8c76"><rect x="0" y="0" width="10" height="1"/><rect x="0" y="0" width="1" height="10"/><rect x="9" y="0" width="1" height="10"/><rect x="0" y="9" width="3" height="1"/><rect x="6" y="9" width="4" height="1"/><rect x="4" y="4" width="1" height="10"/><rect x="4" y="13" width="10" height="1"/><rect x="13" y="4" width="1" height="10"/><rect x="4" y="4" width="4" height="1"/><rect x="11" y="4" width="3" height="1"/></svg></div>
<div class="abs" style="left:18px;top:261px;width:363px;height:1px;background:#ebebeb"></div>
<div class="t s" style="left:20px;top:245px;line-height:16px;color:#2e2e2e"><span class="m">15</span></div>
<div class="t s" style="left:70px;top:245px;color:#2e2e2e">二次屏柜<span class="m">8<span style="letter-spacing:-0.67px">F</span></span></div>
<div class="abs" style="left:231px;top:252px;width:6px;height:1px;background:#222"></div>
<div class="abs" style="left:349px;top:246px;width:14px;height:14px"><svg width="14" height="14" fill="#2a8c76"><rect x="0" y="0" width="10" height="1"/><rect x="0" y="0" width="1" height="10"/><rect x="9" y="0" width="1" height="10"/><rect x="0" y="9" width="3" height="1"/><rect x="6" y="9" width="4" height="1"/><rect x="4" y="4" width="1" height="10"/><rect x="4" y="13" width="10" height="1"/><rect x="13" y="4" width="1" height="10"/><rect x="4" y="4" width="4" height="1"/><rect x="11" y="4" width="3" height="1"/></svg></div>
<div class="abs" style="left:18px;top:277px;width:363px;height:1px;background:#ebebeb"></div>
<div class="t s" style="left:20px;top:261px;line-height:16px;color:#2e2e2e"><span class="m">16</span></div>
<div class="t s" style="left:70px;top:261px;color:#2e2e2e">二次屏柜<span class="m">8<span style="letter-spacing:-0.67px">P</span></span></div>
<div class="abs" style="left:231px;top:268px;width:6px;height:1px;background:#222"></div>
<div class="abs" style="left:349px;top:262px;width:14px;height:14px"><svg width="14" height="14" fill="#2a8c76"><rect x="0" y="0" width="10" height="1"/><rect x="0" y="0" width="1" height="10"/><rect x="9" y="0" width="1" height="10"/><rect x="0" y="9" width="3" height="1"/><rect x="6" y="9" width="4" height="1"/><rect x="4" y="4" width="1" height="10"/><rect x="4" y="13" width="10" height="1"/><rect x="13" y="4" width="1" height="10"/><rect x="4" y="4" width="4" height="1"/><rect x="11" y="4" width="3" height="1"/></svg></div>
<div class="abs" style="left:18px;top:293px;width:363px;height:1px;background:#ebebeb"></div>
<div class="t s" style="left:20px;top:277px;line-height:16px;color:#2e2e2e"><span class="m">17</span></div>
<div class="t s" style="left:70px;top:277px;color:#2e2e2e">二次屏柜<span class="m">9<span style="letter-spacing:-0.67px">F</span></span></div>
<div class="abs" style="left:231px;top:284px;width:6px;height:1px;background:#222"></div>
<div class="abs" style="left:349px;top:278px;width:14px;height:14px"><svg width="14" height="14" fill="#2a8c76"><rect x="0" y="0" width="10" height="1"/><rect x="0" y="0" width="1" height="10"/><rect x="9" y="0" width="1" height="10"/><rect x="0" y="9" width="3" height="1"/><rect x="6" y="9" width="4" height="1"/><rect x="4" y="4" width="1" height="10"/><rect x="4" y="13" width="10" height="1"/><rect x="13" y="4" width="1" height="10"/><rect x="4" y="4" width="4" height="1"/><rect x="11" y="4" width="3" height="1"/></svg></div>
<div class="abs" style="left:18px;top:309px;width:363px;height:1px;background:#ebebeb"></div>
<div class="t s" style="left:20px;top:293px;line-height:16px;color:#2e2e2e"><span class="m">18</span></div>
<div class="t s" style="left:70px;top:293px;color:#2e2e2e">二次屏柜<span class="m">9<span style="letter-spacing:-0.67px">P</span></span></div>
<div class="abs" style="left:231px;top:300px;width:6px;height:1px;background:#222"></div>
<div class="abs" style="left:349px;top:294px;width:14px;height:14px"><svg width="14" height="14" fill="#2a8c76"><rect x="0" y="0" width="10" height="1"/><rect x="0" y="0" width="1" height="10"/><rect x="9" y="0" width="1" height="10"/><rect x="0" y="9" width="3" height="1"/><rect x="6" y="9" width="4" height="1"/><rect x="4" y="4" width="1" height="10"/><rect x="4" y="13" width="10" height="1"/><rect x="13" y="4" width="1" height="10"/><rect x="4" y="4" width="4" height="1"/><rect x="11" y="4" width="3" height="1"/></svg></div>
<div class="abs" style="left:18px;top:325px;width:363px;height:1px;background:#ebebeb"></div>
<div class="t s" style="left:20px;top:309px;line-height:16px;color:#2e2e2e"><span class="m">19</span></div>
<div class="t s" style="left:70px;top:309px;color:#2e2e2e">二次屏柜<span class="m">10<span style="letter-spacing:-0.67px">F</span></span></div>
<div class="abs" style="left:231px;top:316px;width:6px;height:1px;background:#222"></div>
<div class="abs" style="left:349px;top:310px;width:14px;height:14px"><svg width="14" height="14" fill="#2a8c76"><rect x="0" y="0" width="10" height="1"/><rect x="0" y="0" width="1" height="10"/><rect x="9" y="0" width="1" height="10"/><rect x="0" y="9" width="3" height="1"/><rect x="6" y="9" width="4" height="1"/><rect x="4" y="4" width="1" height="10"/><rect x="4" y="13" width="10" height="1"/><rect x="13" y="4" width="1" height="10"/><rect x="4" y="4" width="4" height="1"/><rect x="11" y="4" width="3" height="1"/></svg></div>
<div class="abs" style="left:18px;top:341px;width:363px;height:1px;background:#ebebeb"></div>
<div class="t s" style="left:20px;top:325px;line-height:16px;color:#2e2e2e"><span class="m">20</span></div>
<div class="t s" style="left:70px;top:325px;color:#2e2e2e">二次屏柜<span class="m">10<span style="letter-spacing:-0.67px">P</span></span></div>
<div class="abs" style="left:231px;top:332px;width:6px;height:1px;background:#222"></div>
<div class="abs" style="left:349px;top:326px;width:14px;height:14px"><svg width="14" height="14" fill="#2a8c76"><rect x="0" y="0" width="10" height="1"/><rect x="0" y="0" width="1" height="10"/><rect x="9" y="0" width="1" height="10"/><rect x="0" y="9" width="3" height="1"/><rect x="6" y="9" width="4" height="1"/><rect x="4" y="4" width="1" height="10"/><rect x="4" y="13" width="10" height="1"/><rect x="13" y="4" width="1" height="10"/><rect x="4" y="4" width="4" height="1"/><rect x="11" y="4" width="3" height="1"/></svg></div>
<div class="abs" style="left:18px;top:357px;width:363px;height:1px;background:#ebebeb"></div>
<div class="t s" style="left:20px;top:341px;line-height:16px;color:#2e2e2e"><span class="m">21</span></div>
<div class="t s" style="left:70px;top:341px;color:#2e2e2e">二次屏柜<span class="m">11<span style="letter-spacing:-0.67px">F</span></span></div>
<div class="abs" style="left:231px;top:348px;width:6px;height:1px;background:#222"></div>
<div class="abs" style="left:349px;top:342px;width:14px;height:14px"><svg width="14" height="14" fill="#2a8c76"><rect x="0" y="0" width="10" height="1"/><rect x="0" y="0" width="1" height="10"/><rect x="9" y="0" width="1" height="10"/><rect x="0" y="9" width="3" height="1"/><rect x="6" y="9" width="4" height="1"/><rect x="4" y="4" width="1" height="10"/><rect x="4" y="13" width="10" height="1"/><rect x="13" y="4" width="1" height="10"/><rect x="4" y="4" width="4" height="1"/><rect x="11" y="4" width="3" height="1"/></svg></div>
<div class="abs" style="left:18px;top:373px;width:363px;height:1px;background:#ebebeb"></div>
<div class="t s" style="left:20px;top:357px;line-height:16px;color:#2e2e2e"><span class="m">22</span></div>
<div class="t s" style="left:70px;top:357px;color:#2e2e2e">二次屏柜<span class="m">11<span style="letter-spacing:-0.67px">P</span></span></div>
<div class="abs" style="left:231px;top:364px;width:6px;height:1px;background:#222"></div>
<div class="abs" style="left:349px;top:358px;width:14px;height:14px"><svg width="14" height="14" fill="#2a8c76"><rect x="0" y="0" width="10" height="1"/><rect x="0" y="0" width="1" height="10"/><rect x="9" y="0" width="1" height="10"/><rect x="0" y="9" width="3" height="1"/><rect x="6" y="9" width="4" height="1"/><rect x="4" y="4" width="1" height="10"/><rect x="4" y="13" width="10" height="1"/><rect x="13" y="4" width="1" height="10"/><rect x="4" y="4" width="4" height="1"/><rect x="11" y="4" width="3" height="1"/></svg></div>
<div class="abs" style="left:18px;top:389px;width:363px;height:1px;background:#ebebeb"></div>
<div class="t s" style="left:20px;top:373px;line-height:16px;color:#2e2e2e"><span class="m">23</span></div>
<div class="t s" style="left:70px;top:373px;color:#2e2e2e">二次屏柜<span class="m">12<span style="letter-spacing:-0.67px">F</span></span></div>
<div class="abs" style="left:231px;top:380px;width:6px;height:1px;background:#222"></div>
<div class="abs" style="left:349px;top:374px;width:14px;height:14px"><svg width="14" height="14" fill="#2a8c76"><rect x="0" y="0" width="10" height="1"/><rect x="0" y="0" width="1" height="10"/><rect x="9" y="0" width="1" height="10"/><rect x="0" y="9" width="3" height="1"/><rect x="6" y="9" width="4" height="1"/><rect x="4" y="4" width="1" height="10"/><rect x="4" y="13" width="10" height="1"/><rect x="13" y="4" width="1" height="10"/><rect x="4" y="4" width="4" height="1"/><rect x="11" y="4" width="3" height="1"/></svg></div>
<div class="abs" style="left:18px;top:405px;width:363px;height:1px;background:#ebebeb"></div>
<div class="t s" style="left:20px;top:389px;line-height:16px;color:#2e2e2e"><span class="m">24</span></div>
<div class="t s" style="left:70px;top:389px;color:#2e2e2e">二次屏柜<span class="m">12<span style="letter-spacing:-0.67px">P</span></span></div>
<div class="abs" style="left:231px;top:396px;width:6px;height:1px;background:#222"></div>
<div class="abs" style="left:349px;top:390px;width:14px;height:14px"><svg width="14" height="14" fill="#2a8c76"><rect x="0" y="0" width="10" height="1"/><rect x="0" y="0" width="1" height="10"/><rect x="9" y="0" width="1" height="10"/><rect x="0" y="9" width="3" height="1"/><rect x="6" y="9" width="4" height="1"/><rect x="4" y="4" width="1" height="10"/><rect x="4" y="13" width="10" height="1"/><rect x="13" y="4" width="1" height="10"/><rect x="4" y="4" width="4" height="1"/><rect x="11" y="4" width="3" height="1"/></svg></div>
<div class="abs" style="left:18px;top:421px;width:363px;height:1px;background:#ebebeb"></div>
<div class="t s" style="left:20px;top:405px;line-height:16px;color:#2e2e2e"><span class="m">25</span></div>
<div class="t s" style="left:70px;top:405px;color:#2e2e2e">二次屏柜<span class="m">13<span style="letter-spacing:-0.67px">F</span></span></div>
<div class="abs" style="left:231px;top:412px;width:6px;height:1px;background:#222"></div>
<div class="abs" style="left:349px;top:406px;width:14px;height:14px"><svg width="14" height="14" fill="#2a8c76"><rect x="0" y="0" width="10" height="1"/><rect x="0" y="0" width="1" height="10"/><rect x="9" y="0" width="1" height="10"/><rect x="0" y="9" width="3" height="1"/><rect x="6" y="9" width="4" height="1"/><rect x="4" y="4" width="1" height="10"/><rect x="4" y="13" width="10" height="1"/><rect x="13" y="4" width="1" height="10"/><rect x="4" y="4" width="4" height="1"/><rect x="11" y="4" width="3" height="1"/></svg></div>
<div class="abs" style="left:18px;top:437px;width:363px;height:1px;background:#ebebeb"></div>
<div class="t s" style="left:20px;top:421px;line-height:16px;color:#2e2e2e"><span class="m">26</span></div>
<div class="t s" style="left:70px;top:421px;color:#2e2e2e">二次屏柜<span class="m">13<span style="letter-spacing:-0.67px">P</span></span></div>
<div class="abs" style="left:231px;top:428px;width:6px;height:1px;background:#222"></div>
<div class="abs" style="left:349px;top:422px;width:14px;height:14px"><svg width="14" height="14" fill="#2a8c76"><rect x="0" y="0" width="10" height="1"/><rect x="0" y="0" width="1" height="10"/><rect x="9" y="0" width="1" height="10"/><rect x="0" y="9" width="3" height="1"/><rect x="6" y="9" width="4" height="1"/><rect x="4" y="4" width="1" height="10"/><rect x="4" y="13" width="10" height="1"/><rect x="13" y="4" width="1" height="10"/><rect x="4" y="4" width="4" height="1"/><rect x="11" y="4" width="3" height="1"/></svg></div>
<div class="abs" style="left:18px;top:453px;width:363px;height:1px;background:#ebebeb"></div>
<div class="t s" style="left:20px;top:437px;line-height:16px;color:#2e2e2e"><span class="m">27</span></div>
<div class="t s" style="left:70px;top:437px;color:#2e2e2e">二次屏柜<span class="m">14<span style="letter-spacing:-0.67px">F</span></span></div>
<div class="abs" style="left:231px;top:444px;width:6px;height:1px;background:#222"></div>
<div class="abs" style="left:349px;top:438px;width:14px;height:14px"><svg width="14" height="14" fill="#2a8c76"><rect x="0" y="0" width="10" height="1"/><rect x="0" y="0" width="1" height="10"/><rect x="9" y="0" width="1" height="10"/><rect x="0" y="9" width="3" height="1"/><rect x="6" y="9" width="4" height="1"/><rect x="4" y="4" width="1" height="10"/><rect x="4" y="13" width="10" height="1"/><rect x="13" y="4" width="1" height="10"/><rect x="4" y="4" width="4" height="1"/><rect x="11" y="4" width="3" height="1"/></svg></div>
<div class="abs" style="left:18px;top:469px;width:363px;height:1px;background:#ebebeb"></div>
<div class="t s" style="left:20px;top:453px;line-height:16px;color:#2e2e2e"><span class="m">28</span></div>
<div class="t s" style="left:70px;top:453px;color:#2e2e2e">二次屏柜<span class="m">14<span style="letter-spacing:-0.67px">P</span></span></div>
<div class="abs" style="left:231px;top:460px;width:6px;height:1px;background:#222"></div>
<div class="abs" style="left:349px;top:454px;width:14px;height:14px"><svg width="14" height="14" fill="#2a8c76"><rect x="0" y="0" width="10" height="1"/><rect x="0" y="0" width="1" height="10"/><rect x="9" y="0" width="1" height="10"/><rect x="0" y="9" width="3" height="1"/><rect x="6" y="9" width="4" height="1"/><rect x="4" y="4" width="1" height="10"/><rect x="4" y="13" width="10" height="1"/><rect x="13" y="4" width="1" height="10"/><rect x="4" y="4" width="4" height="1"/><rect x="11" y="4" width="3" height="1"/></svg></div>
<div class="abs" style="left:67px;top:21px;width:1px;height:442px;background:#ebebeb"></div>
<div class="abs" style="left:227px;top:21px;width:1px;height:442px;background:#ebebeb"></div>
<div class="abs" style="left:345px;top:21px;width:1px;height:442px;background:#ebebeb"></div>
<div class="abs" style="left:380px;top:21px;width:1px;height:442px;background:#ebebeb"></div>
<div class="abs" style="left:410px;top:1px;width:16px;height:461px;background:#f0f0f0"></div>
<svg class="abs" style="left:413px;top:7px" width="9" height="7"><path d="M1.3 6L4.5 1.6L7.7 6" fill="none" stroke="#505050" stroke-width="2.1"/></svg>
<div class="abs" style="left:410px;top:18px;width:15px;height:118px;background:#cdcdcd"></div>
<svg class="abs" style="left:413px;top:450px" width="9" height="7"><path d="M1.3 1L4.5 5.4L7.7 1" fill="none" stroke="#505050" stroke-width="2.1"/></svg>
</div>
<div class="abs" style="left:701px;top:81px;width:458px;height:465px;border:1px solid #646464;background:#fff;overflow:hidden">
<div class="abs" style="left:1px;top:21px;width:20px;height:425px;background:#e6e6e6;border-right:1px solid #d8d8d8"></div>
<div class="abs" style="left:22px;top:29px;width:416px;height:1px;background:#ebebeb"></div>
<div class="abs" style="left:1px;top:29px;width:20px;height:1px;background:#d4d4d4"></div>
<div class="abs" style="left:39px;top:11px;width:11px;height:11px"><svg width="11" height="11"><rect x="0.5" y="0.5" width="10" height="10" fill="#fff" stroke="#b0b0b0"/></svg></div>
<div class="t m" style="left:70px;top:8px">4</div>
<div class="t s" style="left:115px;top:8px;color:#000"><span class="m">35k<span style="letter-spacing:-2.67px">V</span></span>电容器组<span class="m"><span style="letter-spacing:-2.67px">D</span></span>相</div>
<div class="abs" style="left:22px;top:54px;width:416px;height:1px;background:#ebebeb"></div>
<div class="abs" style="left:1px;top:54px;width:20px;height:1px;background:#d4d4d4"></div>
<div class="abs" style="left:39px;top:36px;width:11px;height:11px"><svg width="11" height="11"><rect x="0.5" y="0.5" width="10" height="10" fill="#fff" stroke="#b0b0b0"/></svg></div>
<div class="t m" style="left:70px;top:33px">5</div>
<div class="t s" style="left:115px;top:33px;color:#000"><span class="m">35k<span style="letter-spacing:-2.67px">V</span></span>电容器组<span class="m"><span style="letter-spacing:-2.67px">A</span></span>相</div>
<div class="abs" style="left:22px;top:79px;width:416px;height:1px;background:#ebebeb"></div>
<div class="abs" style="left:1px;top:79px;width:20px;height:1px;background:#d4d4d4"></div>
<div class="abs" style="left:39px;top:61px;width:11px;height:11px"><svg width="11" height="11"><rect x="0.5" y="0.5" width="10" height="10" fill="#fff" stroke="#b0b0b0"/></svg></div>
<div class="t m" style="left:70px;top:58px">6</div>
<div class="t s" style="left:115px;top:58px;color:#000"><span class="m">35k<span style="letter-spacing:-2.67px">V</span></span>电容器组<span class="m"><span style="letter-spacing:-2.00px">B</span></span>相</div>
<div class="abs" style="left:22px;top:104px;width:416px;height:1px;background:#ebebeb"></div>
<div class="abs" style="left:1px;top:104px;width:20px;height:1px;background:#d4d4d4"></div>
<div class="abs" style="left:39px;top:86px;width:11px;height:11px"><svg width="11" height="11"><rect x="0.5" y="0.5" width="10" height="10" fill="#fff" stroke="#b0b0b0"/></svg></div>
<div class="t m" style="left:70px;top:83px">7</div>
<div class="t s" style="left:115px;top:83px;color:#000"><span class="m">35k<span style="letter-spacing:-2.67px">V</span></span>电容器组<span class="m"><span style="letter-spacing:-2.00px">C</span></span>相</div>
<div class="abs" style="left:22px;top:105px;width:416px;height:24px;background:#74dcf1"></div>
<div class="abs" style="left:22px;top:129px;width:416px;height:1px;background:#ececec"></div>
<div class="abs" style="left:1px;top:129px;width:20px;height:1px;background:#d4d4d4"></div>
<div class="abs" style="left:39px;top:111px;width:11px;height:11px"><svg width="11" height="11"><rect x="0.5" y="0.5" width="10" height="10" fill="#fff" stroke="#b0b0b0"/><path d="M2.5 5.5L4.5 7.5L8.5 3.5" fill="none" stroke="#8a8a8a" stroke-width="1.4"/></svg></div>
<div class="t m" style="left:70px;top:108px">8</div>
<div class="t s" style="left:115px;top:108px;color:#000"><span class="m">1<span style="letter-spacing:-0.67px">F</span></span></div>
<div class="t s" style="left:298px;top:108px;color:#000">汇控柜</div>
<div class="abs" style="left:22px;top:130px;width:416px;height:24px;background:#74dcf1"></div>
<div class="abs" style="left:22px;top:154px;width:416px;height:1px;background:#ececec"></div>
<div class="abs" style="left:1px;top:154px;width:20px;height:1px;background:#d4d4d4"></div>
<div class="abs" style="left:39px;top:136px;width:11px;height:11px"><svg width="11" height="11"><rect x="0.5" y="0.5" width="10" height="10" fill="#fff" stroke="#b0b0b0"/><path d="M2.5 5.5L4.5 7.5L8.5 3.5" fill="none" stroke="#b4b4b4" stroke-width="1.4"/></svg></div>
<div class="t m" style="left:70px;top:133px">9</div>
<div class="t s" style="left:115px;top:133px;color:#000"><span class="m">1<span style="letter-spacing:-0.67px">P</span></span></div>
<div class="t s" style="left:298px;top:133px;color:#000">汇控柜</div>
<div class="abs" style="left:22px;top:155px;width:416px;height:24px;background:#74dcf1"></div>
<div class="abs" style="left:22px;top:179px;width:416px;height:1px;background:#ececec"></div>
<div class="abs" style="left:1px;top:179px;width:20px;height:1px;background:#d4d4d4"></div>
<div class="abs" style="left:39px;top:161px;width:11px;height:11px"><svg width="11" height="11"><rect x="0.5" y="0.5" width="10" height="10" fill="#fff" stroke="#b0b0b0"/><path d="M2.5 5.5L4.5 7.5L8.5 3.5" fill="none" stroke="#b4b4b4" stroke-width="1.4"/></svg></div>
<div class="t m" style="left:70px;top:158px">10</div>
<div class="t s" style="left:115px;top:158px;color:#000"><span class="m">2<span style="letter-spacing:-0.67px">F</span></span></div>
<div class="t s" style="left:298px;top:158px;color:#000">汇控柜</div>
<div class="abs" style="left:22px;top:180px;width:416px;height:24px;background:#74dcf1"></div>
<div class="abs" style="left:22px;top:204px;width:416px;height:1px;background:#ececec"></div>
<div class="abs" style="left:1px;top:204px;width:20px;height:1px;background:#d4d4d4"></div>
<div class="abs" style="left:39px;top:186px;width:11px;height:11px"><svg width="11" height="11"><rect x="0.5" y="0.5" width="10" height="10" fill="#fff" stroke="#b0b0b0"/><path d="M2.5 5.5L4.5 7.5L8.5 3.5" fill="none" stroke="#b4b4b4" stroke-width="1.4"/></svg></div>
<div class="t m" style="left:70px;top:183px">11</div>
<div class="t s" style="left:115px;top:183px;color:#000"><span class="m">2<span style="letter-spacing:-0.67px">P</span></span></div>
<div class="t s" style="left:298px;top:183px;color:#000">汇控柜</div>
<div class="abs" style="left:22px;top:205px;width:416px;height:24px;background:#74dcf1"></div>
<div class="abs" style="left:22px;top:229px;width:416px;height:1px;background:#ececec"></div>
<div class="abs" style="left:1px;top:229px;width:20px;height:1px;background:#d4d4d4"></div>
<div class="abs" style="left:39px;top:211px;width:11px;height:11px"><svg width="11" height="11"><rect x="0.5" y="0.5" width="10" height="10" fill="#fff" stroke="#b0b0b0"/><path d="M2.5 5.5L4.5 7.5L8.5 3.5" fill="none" stroke="#b4b4b4" stroke-width="1.4"/></svg></div>
<div class="t m" style="left:70px;top:208px">12</div>
<div class="t s" style="left:115px;top:208px;color:#000"><span class="m">3<span style="letter-spacing:-0.67px">F</span></span></div>
<div class="t s" style="left:298px;top:208px;color:#000">汇控柜</div>
<div class="abs" style="left:22px;top:230px;width:416px;height:24px;background:#74dcf1"></div>
<div class="abs" style="left:22px;top:254px;width:416px;height:1px;background:#ececec"></div>
<div class="abs" style="left:1px;top:254px;width:20px;height:1px;background:#d4d4d4"></div>
<div class="abs" style="left:39px;top:236px;width:11px;height:11px"><svg width="11" height="11"><rect x="0.5" y="0.5" width="10" height="10" fill="#fff" stroke="#b0b0b0"/><path d="M2.5 5.5L4.5 7.5L8.5 3.5" fill="none" stroke="#b4b4b4" stroke-width="1.4"/></svg></div>
<div class="t m" style="left:70px;top:233px">13</div>
<div class="t s" style="left:115px;top:233px;color:#000"><span class="m">3<span style="letter-spacing:-0.67px">P</span></span></div>
<div class="t s" style="left:298px;top:233px;color:#000">汇控柜</div>
<div class="abs" style="left:22px;top:255px;width:416px;height:24px;background:#74dcf1"></div>
<div class="abs" style="left:22px;top:279px;width:416px;height:1px;background:#ececec"></div>
<div class="abs" style="left:1px;top:279px;width:20px;height:1px;background:#d4d4d4"></div>
<div class="abs" style="left:39px;top:261px;width:11px;height:11px"><svg width="11" height="11"><rect x="0.5" y="0.5" width="10" height="10" fill="#fff" stroke="#b0b0b0"/><path d="M2.5 5.5L4.5 7.5L8.5 3.5" fill="none" stroke="#b4b4b4" stroke-width="1.4"/></svg></div>
<div class="t m" style="left:70px;top:258px">14</div>
<div class="t s" style="left:115px;top:258px;color:#000"><span class="m">4<span style="letter-spacing:-0.67px">F</span></span></div>
<div class="t s" style="left:298px;top:258px;color:#000">汇控柜</div>
<div class="abs" style="left:22px;top:280px;width:416px;height:24px;background:#74dcf1"></div>
<div class="abs" style="left:22px;top:304px;width:416px;height:1px;background:#ececec"></div>
<div class="abs" style="left:1px;top:304px;width:20px;height:1px;background:#d4d4d4"></div>
<div class="abs" style="left:39px;top:286px;width:11px;height:11px"><svg width="11" height="11"><rect x="0.5" y="0.5" width="10" height="10" fill="#fff" stroke="#b0b0b0"/><path d="M2.5 5.5L4.5 7.5L8.5 3.5" fill="none" stroke="#b4b4b4" stroke-width="1.4"/></svg></div>
<div class="t m" style="left:70px;top:283px">15</div>
<div class="t s" style="left:115px;top:283px;color:#000"><span class="m">4<span style="letter-spacing:-0.67px">P</span></span></div>
<div class="t s" style="left:298px;top:283px;color:#000">汇控柜</div>
<div class="abs" style="left:22px;top:305px;width:416px;height:24px;background:#74dcf1"></div>
<div class="abs" style="left:22px;top:329px;width:416px;height:1px;background:#ececec"></div>
<div class="abs" style="left:1px;top:329px;width:20px;height:1px;background:#d4d4d4"></div>
<div class="abs" style="left:39px;top:311px;width:11px;height:11px"><svg width="11" height="11"><rect x="0.5" y="0.5" width="10" height="10" fill="#fff" stroke="#b0b0b0"/><path d="M2.5 5.5L4.5 7.5L8.5 3.5" fill="none" stroke="#b4b4b4" stroke-width="1.4"/></svg></div>
<div class="t m" style="left:70px;top:308px">16</div>
<div class="t s" style="left:115px;top:308px;color:#000"><span class="m">5<span style="letter-spacing:-0.67px">F</span></span></div>
<div class="t s" style="left:298px;top:308px;color:#000">汇控柜</div>
<div class="abs" style="left:22px;top:330px;width:416px;height:24px;background:#74dcf1"></div>
<div class="abs" style="left:22px;top:354px;width:416px;height:1px;background:#ececec"></div>
<div class="abs" style="left:1px;top:354px;width:20px;height:1px;background:#d4d4d4"></div>
<div class="abs" style="left:39px;top:336px;width:11px;height:11px"><svg width="11" height="11"><rect x="0.5" y="0.5" width="10" height="10" fill="#fff" stroke="#b0b0b0"/><path d="M2.5 5.5L4.5 7.5L8.5 3.5" fill="none" stroke="#b4b4b4" stroke-width="1.4"/></svg></div>
<div class="t m" style="left:70px;top:333px">17</div>
<div class="t s" style="left:115px;top:333px;color:#000"><span class="m">5<span style="letter-spacing:-0.67px">P</span></span></div>
<div class="t s" style="left:298px;top:333px;color:#000">汇控柜</div>
<div class="abs" style="left:22px;top:355px;width:416px;height:24px;background:#74dcf1"></div>
<div class="abs" style="left:22px;top:379px;width:416px;height:1px;background:#ececec"></div>
<div class="abs" style="left:1px;top:379px;width:20px;height:1px;background:#d4d4d4"></div>
<div class="abs" style="left:39px;top:361px;width:11px;height:11px"><svg width="11" height="11"><rect x="0.5" y="0.5" width="10" height="10" fill="#fff" stroke="#b0b0b0"/><path d="M2.5 5.5L4.5 7.5L8.5 3.5" fill="none" stroke="#b4b4b4" stroke-width="1.4"/></svg></div>
<div class="t m" style="left:70px;top:358px">18</div>
<div class="t s" style="left:115px;top:358px;color:#000"><span class="m">6<span style="letter-spacing:-0.67px">F</span></span></div>
<div class="t s" style="left:298px;top:358px;color:#000">汇控柜</div>
<div class="abs" style="left:22px;top:380px;width:416px;height:24px;background:#74dcf1"></div>
<div class="abs" style="left:22px;top:404px;width:416px;height:1px;background:#ececec"></div>
<div class="abs" style="left:1px;top:404px;width:20px;height:1px;background:#d4d4d4"></div>
<div class="abs" style="left:39px;top:386px;width:11px;height:11px"><svg width="11" height="11"><rect x="0.5" y="0.5" width="10" height="10" fill="#fff" stroke="#b0b0b0"/><path d="M2.5 5.5L4.5 7.5L8.5 3.5" fill="none" stroke="#b4b4b4" stroke-width="1.4"/></svg></div>
<div class="t m" style="left:70px;top:383px">19</div>
<div class="t s" style="left:115px;top:383px;color:#000"><span class="m">6<span style="letter-spacing:-0.67px">P</span></span></div>
<div class="t s" style="left:298px;top:383px;color:#000">汇控柜</div>
<div class="abs" style="left:22px;top:405px;width:416px;height:24px;background:#74dcf1"></div>
<div class="abs" style="left:22px;top:429px;width:416px;height:1px;background:#ececec"></div>
<div class="abs" style="left:1px;top:429px;width:20px;height:1px;background:#d4d4d4"></div>
<div class="abs" style="left:39px;top:411px;width:11px;height:11px"><svg width="11" height="11"><rect x="0.5" y="0.5" width="10" height="10" fill="#fff" stroke="#b0b0b0"/><path d="M2.5 5.5L4.5 7.5L8.5 3.5" fill="none" stroke="#b4b4b4" stroke-width="1.4"/></svg></div>
<div class="t m" style="left:70px;top:408px">20</div>
<div class="t s" style="left:115px;top:408px;color:#000"><span class="m">7<span style="letter-spacing:-0.67px">F</span></span></div>
<div class="t s" style="left:298px;top:408px;color:#000">汇控柜</div>
<div class="abs" style="left:22px;top:430px;width:416px;height:24px;background:#74dcf1"></div>
<div class="abs" style="left:22px;top:454px;width:416px;height:1px;background:#ececec"></div>
<div class="abs" style="left:1px;top:454px;width:20px;height:1px;background:#d4d4d4"></div>
<div class="abs" style="left:39px;top:436px;width:11px;height:11px"><svg width="11" height="11"><rect x="0.5" y="0.5" width="10" height="10" fill="#fff" stroke="#b0b0b0"/><path d="M2.5 5.5L4.5 7.5L8.5 3.5" fill="none" stroke="#b4b4b4" stroke-width="1.4"/></svg></div>
<div class="t m" style="left:70px;top:433px">21</div>
<div class="t s" style="left:115px;top:433px;color:#000"><span class="m">7<span style="letter-spacing:-0.67px">P</span></span></div>
<div class="t s" style="left:298px;top:433px;color:#000">汇控柜</div>
<div class="abs" style="left:66px;top:21px;width:1px;height:425px;background:#e9e9e9"></div>
<div class="abs" style="left:111px;top:21px;width:1px;height:425px;background:#e9e9e9"></div>
<div class="abs" style="left:294px;top:21px;width:1px;height:425px;background:#e9e9e9"></div>
<div class="abs" style="left:1px;top:1px;width:437px;height:20px;background:#e6e6e6;border-bottom:1px solid #a8a8a8"></div>
<svg class="abs" style="left:6px;top:7px" width="10" height="10"><path d="M10 0L10 9.5L0.5 9.5Z" fill="#d2d2d2"/></svg>
<div class="abs" style="left:20px;top:2px;width:1px;height:18px;background:#cfcfcf"></div>
<div class="abs" style="left:65px;top:2px;width:1px;height:18px;background:#cfcfcf"></div>
<div class="abs" style="left:110px;top:2px;width:1px;height:18px;background:#cfcfcf"></div>
<div class="abs" style="left:293px;top:2px;width:1px;height:18px;background:#cfcfcf"></div>
<div class="t" style="left:26px;top:4px;color:#333">选择</div>
<div class="t" style="left:70px;top:4px;color:#333">序号</div>
<div class="t" style="left:115px;top:4px;color:#333">设备编号</div>
<div class="t" style="left:298px;top:4px;color:#333">设备名称</div>
<div class="abs" style="left:439px;top:1px;width:16px;height:461px;background:#f0f0f0"></div>
<svg class="abs" style="left:442px;top:7px" width="9" height="7"><path d="M1.3 6L4.5 1.6L7.7 6" fill="none" stroke="#505050" stroke-width="2.1"/></svg>
<div class="abs" style="left:439px;top:36px;width:15px;height:83px;background:#cdcdcd"></div>
<svg class="abs" style="left:442px;top:434px" width="9" height="7"><path d="M1.3 1L4.5 5.4L7.7 1" fill="none" stroke="#505050" stroke-width="2.1"/></svg>
<div class="abs" style="left:1px;top:446px;width:438px;height:16px;background:#f0f0f0"></div>
<div class="abs" style="left:18px;top:446px;width:368px;height:15px;background:#cdcdcd"></div>
<svg class="abs" style="left:6px;top:449px" width="7" height="9"><path d="M6 1.3L1.6 4.5L6 7.7" fill="none" stroke="#505050" stroke-width="2.1"/></svg>
<svg class="abs" style="left:427px;top:449px" width="7" height="9"><path d="M1 1.3L5.4 4.5L1 7.7" fill="none" stroke="#505050" stroke-width="2.1"/></svg>
</div>
<svg class="abs" style="left:702px;top:557px" width="11" height="11"><rect x="0.5" y="0.5" width="10" height="10" fill="#fff" stroke="#a8a8a8"/></svg>
<div class="t" style="left:716px;top:555px;color:#333">隐藏已关联设备</div>
<div class="abs" style="left:17px;top:585px;width:75px;height:23px;border:1px solid #adadad;background:#fdfdfd"></div>
<div class="t" style="left:15px;top:588px;width:75px;text-align:center;color:#222">自动匹配</div>
<div class="abs" style="left:1004px;top:585px;width:75px;height:23px;border:1px solid #adadad;background:#fdfdfd"></div>
<div class="t" style="left:1002px;top:588px;width:75px;text-align:center;color:#222">应用</div>
<div class="abs" style="left:1094px;top:585px;width:75px;height:23px;border:1px solid #adadad;background:#fdfdfd"></div>
<div class="t" style="left:1092px;top:588px;width:75px;text-align:center;color:#222">取消</div>
</body></html>
